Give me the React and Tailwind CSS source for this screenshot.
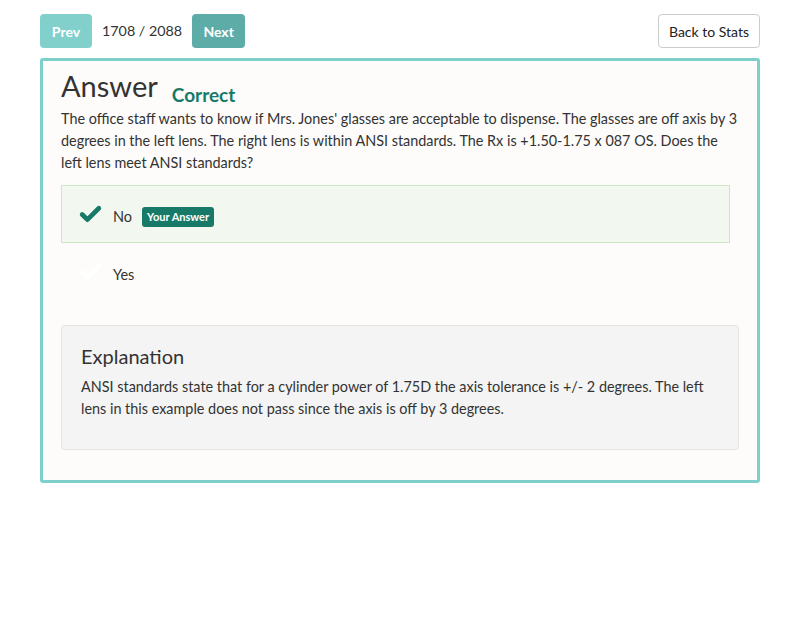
import { Check } from 'lucide-react';

const font = { fontFamily: 'Lato, "Open Sans", sans-serif' };

function Option({ label, selected, correct }) {
    return (
        <div
            className={
                selected
                    ? 'flex h-[58px] w-[669px] items-center border border-[#cde6c6] bg-[#f2f8ef] pl-[16px] pt-[5px]'
                    : 'flex h-[58px] w-[669px] items-center border border-transparent pl-[16px] pt-[5px]'
            }
        >
            <Check
                className={correct ? '-mt-[4px] text-[#177a68]' : '-mt-[4px] text-white'}
                size={25}
                strokeWidth={4.5}
            />
            <span className="ml-[10px] text-[14.5px] text-[#333]">{label}</span>
            {selected ? (
                <span className="ml-[10px] rounded-[3px] bg-[#177a68] px-[5px] py-[2px] text-[11px] font-bold leading-[16px] text-white">
                    Your Answer
                </span>
            ) : null}
        </div>
    );
}

export default function App() {
    return (
        <div className="min-h-[620px] bg-white px-[40px] pt-[14px]" style={font}>
            <div className="flex items-center justify-between">
                <div className="flex items-center">
                    <button className="h-[34px] w-[52px] rounded-[4px] bg-[#81d0cc] text-[14px] font-bold text-white">
                        Prev
                    </button>
                    <span className="mx-[10px] text-[14.3px] text-[#333]">1708 / 2088</span>
                    <button className="h-[34px] w-[53px] rounded-[4px] bg-[#5eaca7] text-[14px] font-bold text-white">
                        Next
                    </button>
                </div>
                <button className="h-[34px] rounded-[4px] border border-[#ccc] bg-white px-[10px] text-[14px] text-[#222]">
                    Back to Stats
                </button>
            </div>
            <div className="mt-[10px] rounded-[3px] border-[3px] border-[#7ccfcb] bg-[#fdfcfa] px-[18px] pb-[30px] pt-[6px]">
                <div className="flex items-end">
                    <h1 className="text-[29px] leading-[38px] text-[#333]">Answer</h1>
                    <span className="-mb-[4px] ml-[14px] text-[19px] font-bold leading-[28px] text-[#177a68]">
                        Correct
                    </span>
                </div>
                <p className="mt-[3px] text-[14.4px] leading-[22px] text-[#333]">
                    The office staff wants to know if Mrs. Jones' glasses are acceptable to dispense. The glasses are off
                    axis by 3 degrees in the left lens. The right lens is within ANSI standards. The Rx is +1.50-1.75 x 087
                    OS. Does the left lens meet ANSI standards?
                </p>
                <div className="mt-[11px]">
                    <Option label="No" selected correct />
                    <Option label="Yes" />
                </div>
                <div className="mt-[24px] rounded-[4px] border border-[#e3e3e3] bg-[#f4f4f4] px-[19px] pb-[29px] pt-[16px]">
                    <h2 className="text-[20px] leading-[28px] text-[#333]">Explanation</h2>
                    <p className="mt-[6px] text-[14.4px] leading-[22px] text-[#333]">
                        ANSI standards state that for a cylinder power of 1.75D the axis tolerance is +/- 2 degrees. The
                        left lens in this example does not pass since the axis is off by 3 degrees.
                    </p>
                </div>
            </div>
        </div>
    );
}
